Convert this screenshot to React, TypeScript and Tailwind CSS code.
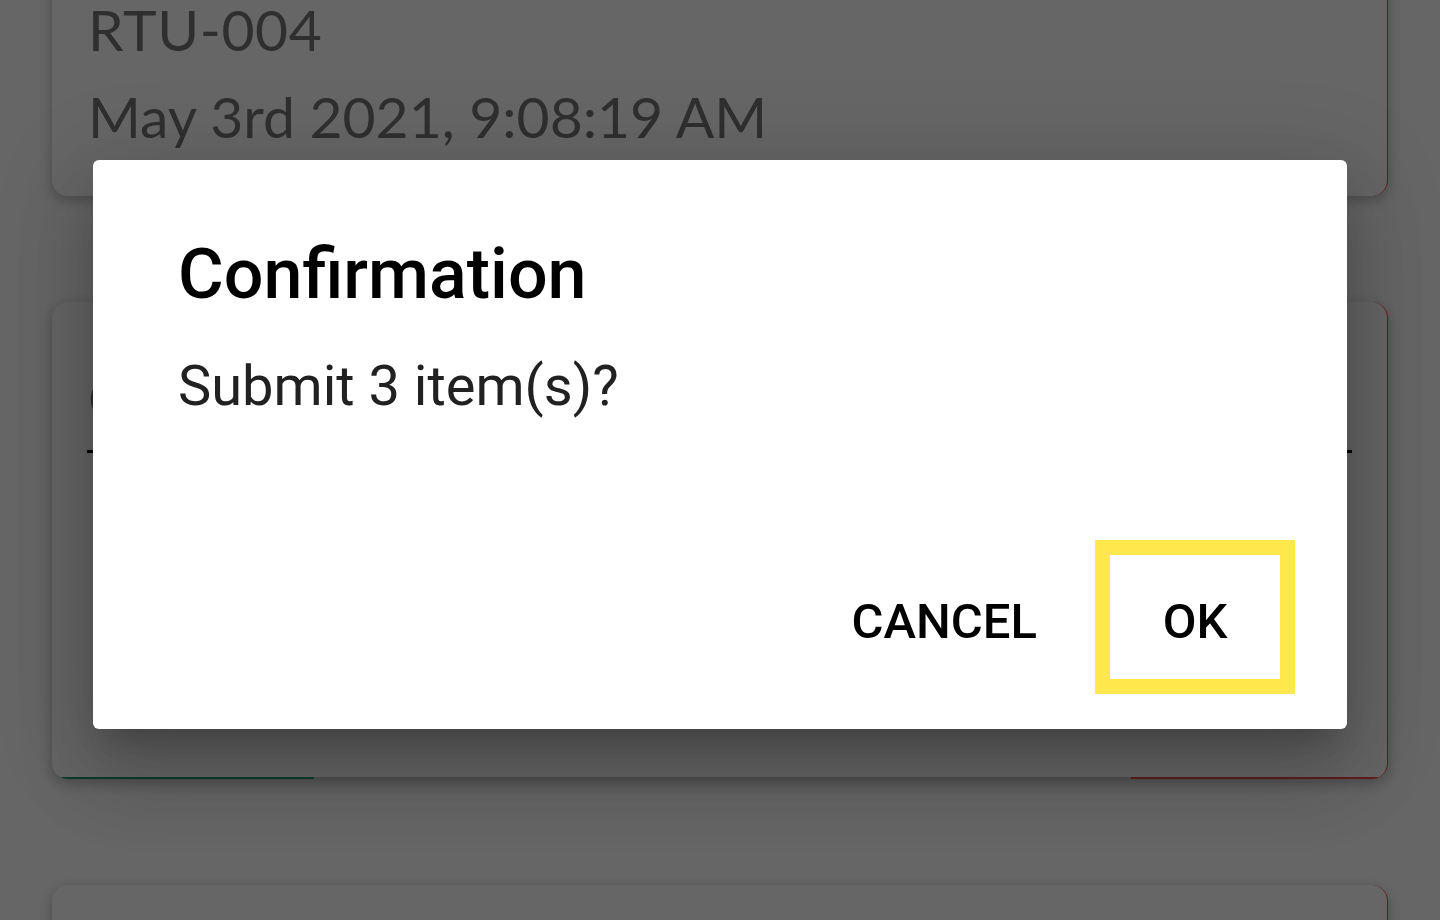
import type { ReactNode } from 'react'

const roboto = { fontFamily: 'Roboto, "Noto Sans", sans-serif' }
const lato = { fontFamily: 'Lato, "Open Sans", sans-serif' }

/** A list card behind the dialog: white, rounded, red rail on the right. */
function Card({ className = '', children, footer }: { className?: string; children?: ReactNode; footer?: boolean }) {
  return (
    <div
      className={`relative overflow-hidden rounded-[16px] border-r-[1.5px] border-[#f04a4a] bg-white shadow-[0_4px_14px_rgba(0,0,0,0.28)] ${className}`}
    >
      {children}
      {footer && (
        <div className="absolute right-0 bottom-0 left-0 flex h-[2px]">
          <div className="ml-[6px] w-[256px] bg-[#0f9d6a]" />
          <div className="flex-1 bg-[#c9c9c9]" />
          <div className="w-[256px] bg-[#f04a4a]" />
        </div>
      )}
    </div>
  )
}

export default function App() {
  return (
    <div className="relative h-[920px] w-full overflow-hidden bg-white" style={lato}>
      {/* list, scrolled so the first card is cut at the top */}
      <div className="flex flex-col gap-[106px] px-[52px]">
        <Card className="-mt-[120px] h-[316px]">
          <div className="flex h-full flex-col justify-end px-[36px] pb-[36px] text-[57px] leading-[87px] text-[#767676]">
            <div className="tracking-[0.01em]">RTU-004</div>
            <div>May 3rd 2021, 9:08:19 AM</div>
          </div>
        </Card>

        <Card className="h-[477px]" footer>
          <div className="px-[36px] pt-[52px] text-[57px] leading-[87px] text-[#767676]">
            <div className="flex items-center justify-between">
              <span>Controller</span>
              <span className="mr-[4px] h-[9px] w-[9px] rounded-full bg-[#00b26e]" />
            </div>
          </div>
          <div className="mx-[35px] mt-[9px] h-[3px] bg-black" />
        </Card>

        <Card className="h-[300px]" />
      </div>

      {/* scrim + dialog */}
      <div className="absolute inset-0 flex justify-center bg-black/60 pt-[160px]">
        <div
          className="flex h-[569px] w-[1254px] flex-col rounded-[6px] bg-white shadow-[0_22px_30px_-14px_rgba(0,0,0,0.2),0_48px_76px_6px_rgba(0,0,0,0.14),0_18px_92px_16px_rgba(0,0,0,0.12)]"
          style={roboto}
        >
          <h2 className="pt-[79px] pl-[85px] text-[70px] leading-[70px] font-medium text-black">Confirmation</h2>
          <p className="mt-[49px] pl-[85px] text-[56px] leading-[56px] text-[#212121]">Submit 3 item(s)?</p>

          <div className="mt-auto flex items-center justify-end pr-[52px] pb-[35px]">
            <button className="mr-[58px] pt-[8px] text-[49px] leading-[49px] font-medium text-black">CANCEL</button>
            <button className="flex h-[154px] w-[200px] items-center justify-center border-[15px] border-[#ffe74c] pt-[8px] text-[49px] leading-[49px] font-medium text-black">
              OK
            </button>
          </div>
        </div>
      </div>
    </div>
  )
}
